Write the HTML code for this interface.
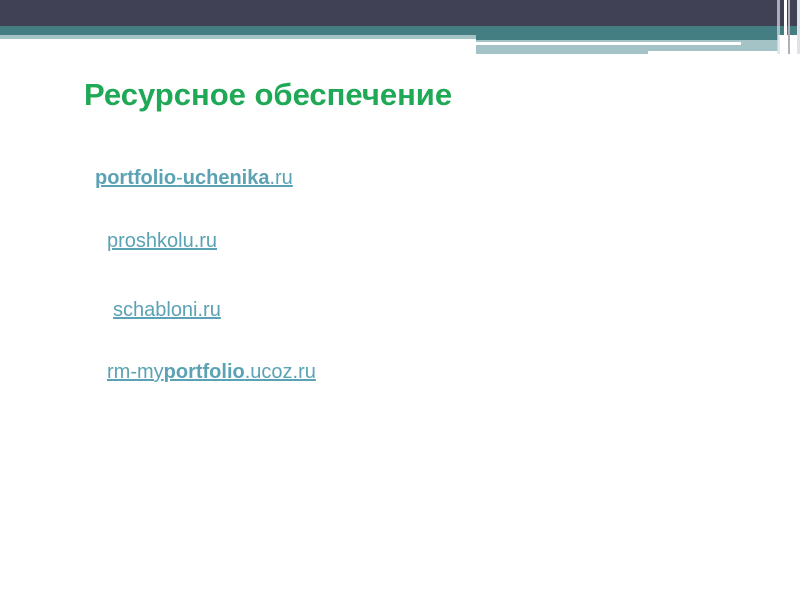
<!DOCTYPE html>
<html><head><meta charset="utf-8"><style>
body{margin:0;width:800px;height:600px;background:#fff;position:relative;overflow:hidden;font-family:"Liberation Sans",Arial,sans-serif}
.a{position:absolute}
a{color:#5aa2b4;text-decoration:underline;font-size:20px;position:absolute;white-space:nowrap}
</style></head><body>
<div class="a" style="left:0;top:0;width:800px;height:26px;background:#414155"></div>
<div class="a" style="left:0;top:26px;width:800px;height:9px;background:#447e82"></div>
<div class="a" style="left:0;top:35px;width:476px;height:4px;background:#a3c3c6"></div>
<div class="a" style="left:476px;top:35px;width:302px;height:5px;background:#447e82"></div>
<div class="a" style="left:476px;top:40px;width:302px;height:12px;background:#a3c3c6"></div>
<div class="a" style="left:476px;top:42px;width:265px;height:3px;background:#fff"></div>
<div class="a" style="left:648px;top:51px;width:134px;height:3px;background:#fff"></div>
<div class="a" style="left:476px;top:51px;width:172px;height:3px;background:#a3c3c6"></div>
<div class="a" style="left:777px;top:0;width:3px;height:54px;background:#d8dde0;opacity:.7"></div>
<div class="a" style="left:784px;top:0;width:3px;height:54px;background:#fff"></div>
<div class="a" style="left:788px;top:0;width:2px;height:54px;background:#b0b0bc"></div>
<div class="a" style="left:797px;top:0;width:3px;height:54px;background:#dde3e6"></div>
<div class="a" style="left:84px;top:77px;font-size:31px;font-weight:bold;color:#1fa855;white-space:nowrap">Ресурсное обеспечение</div>
<a style="left:95px;top:167px"><b>portfolio</b>-<b>uchenika</b>.ru</a>
<a style="left:107px;top:230px">proshkolu.ru</a>
<a style="left:113px;top:299px">schabloni.ru</a>
<a style="left:107px;top:361px">rm-my<b>portfolio</b>.ucoz.ru</a>
</body></html>
